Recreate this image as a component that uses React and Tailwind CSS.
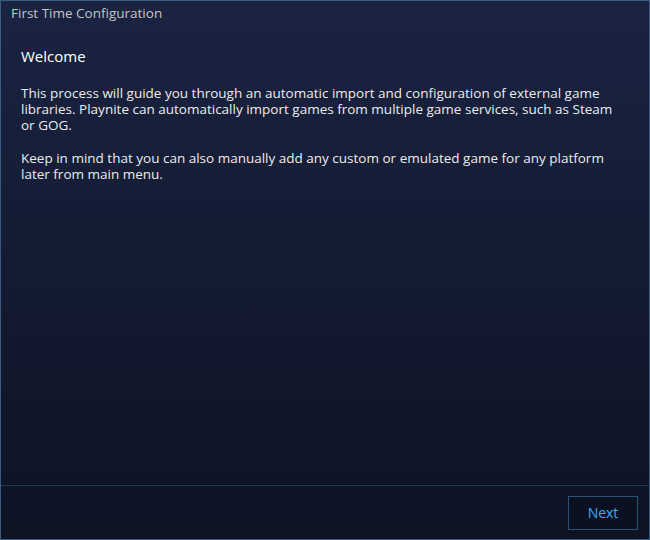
export default function App() {
  return (
    <div
      className="h-[540px] w-[650px] flex flex-col border border-[#3a5a80] bg-gradient-to-b from-[#1a2342] to-[#0d1323] text-[13.5px] text-[#ececec]"
      style={{ fontFamily: '"Open Sans", "DejaVu Sans", sans-serif' }}
    >
      <div className="h-[24px] flex items-center px-[10px] text-[13.5px] text-[#c4c4c8]">
        First Time Configuration
      </div>

      <div className="flex-1 px-[20px] pt-[20px]">
        <h1 className="text-[15px] text-white leading-[22px] mb-[18px]">Welcome</h1>
        <p className="leading-[16px]">
          This process will guide you through an automatic import and configuration of external game libraries. Playnite can automatically import games from multiple game services, such as Steam or GOG.
        </p>
        <p className="leading-[16px] mt-[17px]">
          Keep in mind that you can also manually add any custom or emulated game for any platform later from main menu.
        </p>
      </div>

      <div className="border-t border-[#1d3a58] h-[54px] flex items-center justify-end px-[11px]">
        <button className="w-[70px] h-[34px] border border-[#2a5272] bg-[#0b1120] text-[#3aaef0] text-[14px] font-medium">
          Next
        </button>
      </div>
    </div>
  );
}
